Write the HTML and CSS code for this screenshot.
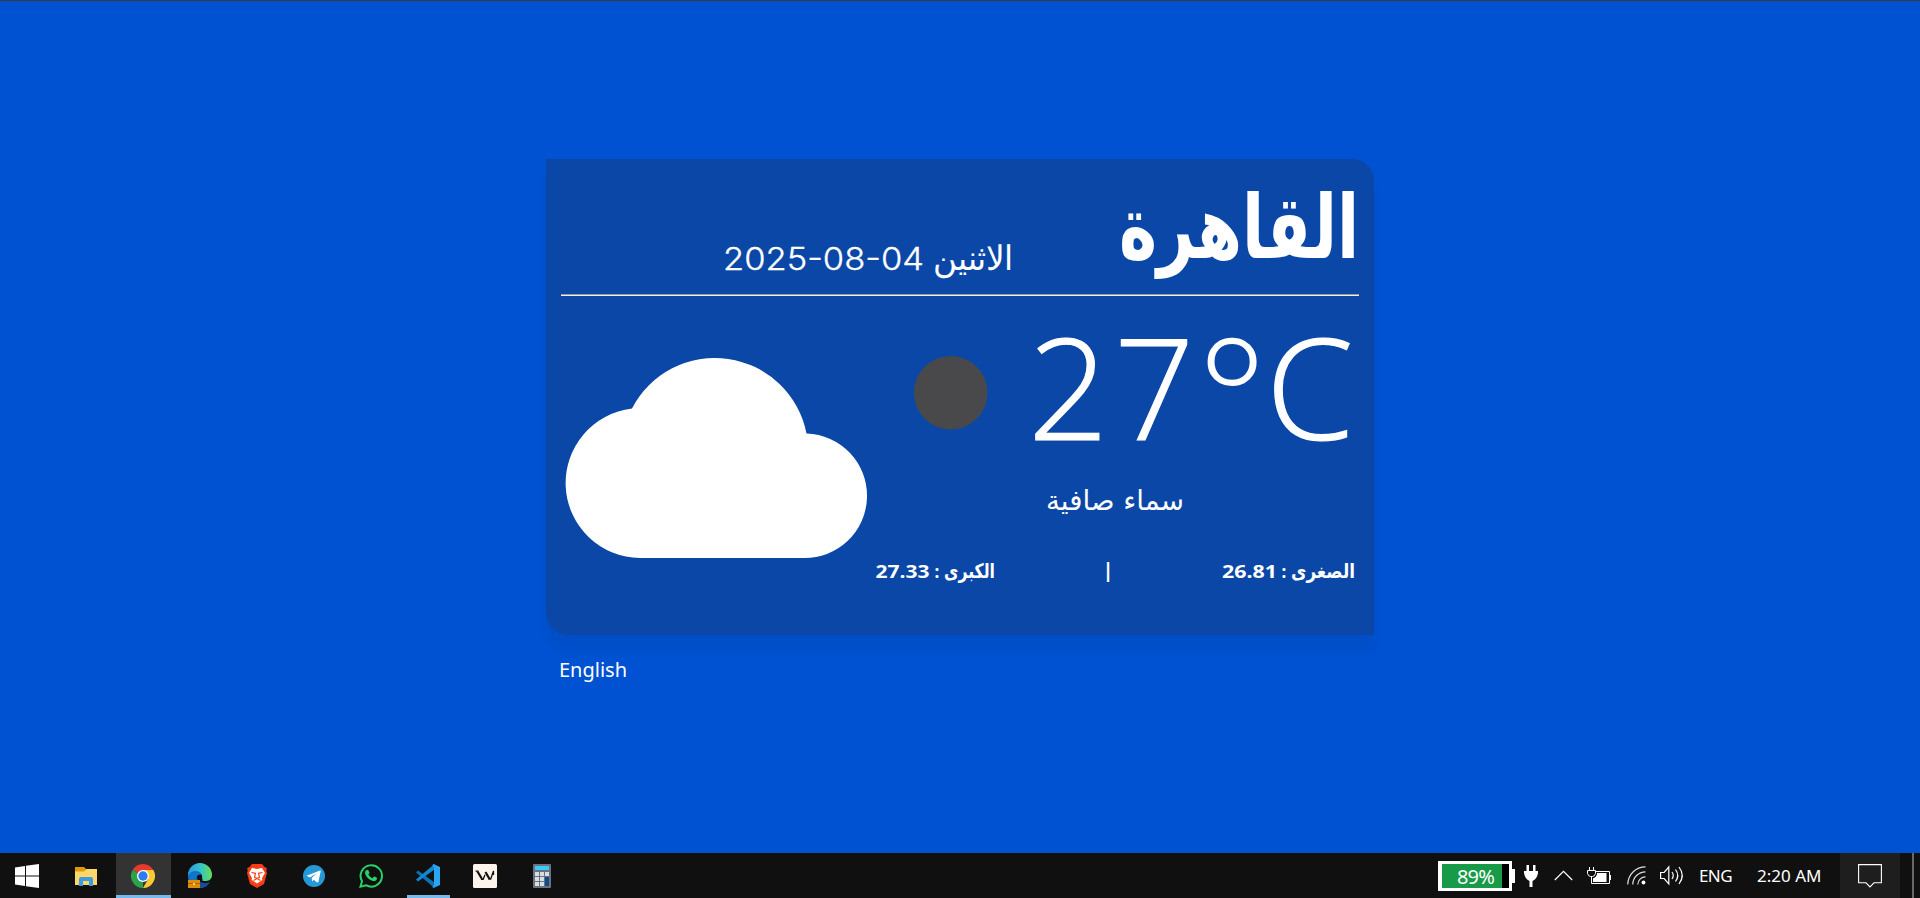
FILE: index.html
```html
<!DOCTYPE html>
<html lang="ar">
<head>
<meta charset="utf-8">
<title>القاهرة</title>
<link rel="stylesheet" href="styles.css">
</head>
<body>
<main class="page">
  <div class="container">
    <section class="card">
      <header class="head">
        <svg class="city" width="240" height="120" viewBox="0 0 240 120"><text x="0" y="84" textLength="240" lengthAdjust="spacingAndGlyphs">القاهرة</text></svg>
        <svg class="date" width="300" height="120" viewBox="0 0 300 120"><text class="num" x="4" y="96" textLength="201" lengthAdjust="spacingAndGlyphs">2025-08-04</text><text class="ar" x="214" y="96" textLength="80" lengthAdjust="spacingAndGlyphs">الاثنين</text></svg>
      </header>
      <hr class="rule">
      <div class="body">
        <div class="info">
          <div class="temp-row">
            <svg class="temp" width="330" height="160" viewBox="0 0 330 160"><text y="144"><tspan x="-1">2</tspan><tspan x="85">7</tspan><tspan class="deg" x="168" y="161">°</tspan><tspan x="237" y="144">C</tspan></text></svg>
            <svg class="moon" width="74" height="74" viewBox="0 0 74 74"><circle cx="36.700" cy="36.700" r="36.800"/></svg>
          </div>
          <svg class="cond" width="160" height="50" viewBox="0 0 160 50"><text x="12" y="34" textLength="138" lengthAdjust="spacingAndGlyphs">سماء صافية</text></svg>
          <div class="range">
            <svg width="132" height="40" viewBox="0 0 132 40"><text x="0" y="22" class="bold" textLength="55" lengthAdjust="spacingAndGlyphs">26.81</text><text x="59.500" y="22" class="bold">:</text><text x="69" y="22" class="bold ar" textLength="64" lengthAdjust="spacingAndGlyphs">الصغرى</text></svg>
            <span class="bar">|</span>
            <svg width="119" height="40" viewBox="0 0 119 40"><text x="0.500" y="22" class="bold" textLength="54" lengthAdjust="spacingAndGlyphs">27.33</text><text x="59.500" y="22" class="bold">:</text><text x="69" y="22" class="bold ar" textLength="51" lengthAdjust="spacingAndGlyphs">الكبرى</text></svg>
          </div>
        </div>
        <svg class="cloud" width="300" height="200" viewBox="0 0 300 200"><path d="M75 200A75 75 0 0 1 67 50.500A93.300 93.300 0 0 1 241.500 75.500A62 62 0 0 1 238 200Z"/></svg>
      </div>
    </section>
    <button class="lang">English</button>
  </div>
</main>
<footer class="taskbar">
  <div class="start"><svg width="24" height="24" viewBox="0 0 24 24"><path fill="#fff" d="M0 3.500 10 2v9.500H0zM11 1.800 24 0v11.500H11zM0 12.500h10V22L0 20.500zM11 12.500h13V24l-13-1.800z"/></svg></div>
  <nav class="apps">
    <div class="app"><svg width="24" height="24" viewBox="0 0 24 24"><path fill="#df9a09" d="M1 3h9l2 2v4H1z"/><path fill="#ffd768" d="M1 7.500h9L12.500 5H23v16H1z"/><path fill="#3d9be0" d="M5 22v-7q0-2 2-2h10q2 0 2 2v7h-4v-5H9v5z"/></svg></div>
    <div class="app active"><svg width="24" height="24" viewBox="0 0 24 24"><path fill="#e33b2e" d="M12 12 1.600 6A12 12 0 0 1 22.400 6z"/><path fill="#2ba24c" d="M12 12 12 24A12 12 0 0 1 1.600 6z"/><path fill="#fcc934" d="M12 6h10.400A12 12 0 0 1 12 24l5.200-9z"/><circle cx="12" cy="12" r="6" fill="#fff"/><circle cx="12" cy="12" r="4.700" fill="#2f7cf0"/></svg></div>
    <div class="app"><svg width="24" height="24" viewBox="0 0 24 24"><defs><linearGradient id="edge"><stop offset="0" stop-color="#229be4"/><stop offset=".5" stop-color="#35c1cf"/><stop offset="1" stop-color="#64df52"/></linearGradient></defs><path fill="url(#edge)" d="M0 11A12 12 0 0 1 24 11c0 5-4 6-7 6-4 0-3-2-3-5 0-4-8-4-12 1z"/><path fill="#1275c9" d="M0 12c2-6 12-7 14-1-4-2-6 2-5 5 1 4 7 6 12 3-3 5-9 6-13 4C2 22 0 17 0 12z"/><path fill="#101010" d="M9.500 12.500q2-2.500 4.500-1 0 3 .5 4.500H12q-2.500-1-2.500-3.500z"/><path fill="#174c9b" d="M9 14c2 5 8 6 13 4-3 6-10 7-13 4z"/><rect y="16" width="12" height="8" fill="#df8c0c"/><path fill="#ad5f06" d="M0 19h12v1H0z"/><path fill="#ffd04a" d="M5 19h2v2H5z"/></svg></div>
    <div class="app"><svg width="24" height="24" viewBox="0 0 24 24"><path fill="#f53d16" d="M7 0h10l2.500 3 2.300 1-.5 3 .7 2-3 11L12 24l-7-4-3-11 .7-2-.5-3 2.300-1z"/><path fill="#fff" d="m7 4 5 1 5-1 3 5-3 5 .4 2L12 19.500 6.600 16l.4-2-3-5z"/><path stroke="#f53d16" stroke-width="1.200" fill="none" d="m6.500 8.500 4 .8-1 4 2.500 1.200 2.500-1.200-1-4 4-.8M8.500 16.500 12 14.500l3.500 2"/></svg></div>
    <div class="app"><svg width="24" height="24" viewBox="0 0 24 24"><circle cx="12" cy="12" r="11" fill="#2599d6"/><path fill="#fff" d="m4.500 11.800 13.500-5.300q1-.2.700 1l-2.300 10.300q-.4 1.100-1.500.4l-3.200-2.400-1.600 1.700-.4-3.500 5-4.800-6.800 4.200z"/></svg></div>
    <div class="app"><svg width="24" height="24" viewBox="0 0 24 24"><path fill="none" stroke="#25d366" stroke-width="2" d="m1.500 22.600 1.500-5.400A10.700 10.700 0 1 1 7 21.200z"/><path fill="#25d366" d="M7.500 6h1.300q.5 0 .7.500l.9 2.100q.1.500-.2.900l-.9 1.100q1.500 2.600 4.200 3.700l1.300-1.500q.4-.4.800-.2l2.200 1.100q.4.300.3.800c-.3 1.600-1.800 2.700-3.500 2.600C10.500 16.500 6.500 12.500 6 9c0-1.300.7-2.500 1.500-3z"/></svg></div>
    <div class="app open"><svg width="24" height="24" viewBox="0 0 24 24"><path fill="#0b70b7" d="M0 8.500 2 6.500l16.500 12V24z"/><path fill="#1187d2" d="m0 15.500 2 2L18.500 5.500V0z"/><path fill="#29a5f3" d="M17.500 0 24 3v18l-6.500 3L16 22.500q2 .2 2-1.500V3q0-1.700-2-1.500z"/></svg></div>
    <div class="app"><svg width="24" height="24" viewBox="0 0 24 24"><rect width="24" height="24" rx="1.500" fill="#fdf4eb"/><path stroke="#111" stroke-width="2.200" fill="none" d="m4.500 7.500 4.500 7.500M12.500 8l4 7"/><path stroke="#111" stroke-width="1.300" fill="none" d="M2.500 7.200h3M8 15.300h2.200l1.800-4.500M15.500 15h2.200l2.800-8v4"/></svg></div>
    <div class="app"><svg width="24" height="24" viewBox="0 0 24 24"><rect x="3" width="18" height="24" rx="1" fill="#68737e"/><path fill="#3dc9f5" d="M5 2h14v4H5z"/><path fill="#d9dee3" d="M5 8h4v4H5zM10 8h4v4h-4zM15 8h4v4h-4zM5 13h4v4H5zM10 13h4v4h-4zM5 18h4v4H5zM10 18h4v4h-4z"/><path fill="#10498e" d="M15 13h4v9h-4z"/></svg></div>
  </nav>
  <div class="tray">
    <div class="battery"><div class="cell"><span>89%</span></div><i class="tip"></i></div>
    <svg class="plug" width="14" height="22" viewBox="0 0 14 22"><path fill="#fff" d="M2.500 0H5v6h4V0h2.500v6H14v2q-1 6-5.500 8v6h-3v-6Q1 14 0 8V6h2.500z"/></svg>
    <svg class="chev" width="19" height="11" viewBox="0 0 19 11"><path fill="none" stroke="#fff" stroke-width="1.200" d="m.8 10 8.700-8.700 8.700 8.700"/></svg>
    <svg class="charge" width="25" height="18" viewBox="0 0 25 18"><g fill="none" stroke="#fff"><path d="M9 4.500h13.500v12h-18v-5M23.500 8v5"/><path d="M2.500 0v3.500m4-3.500v3.500M.5 3.500h8v3q-1 3-3 3h-2q-2 0-3-3zM4.500 9.500v4"/></g><path fill="#fff" d="M10 6h9.500v9H6v-3.500q3-1 4-4z"/></svg>
    <svg class="wifi" width="19" height="19" viewBox="0 0 19 19"><g fill="none" stroke="#ddd" stroke-width="1.200"><path d="M.8 18.500A17.700 17.700 0 0 1 18.500.8M5.800 18.500A12.700 12.700 0 0 1 18.500 5.800M10.800 18.500A7.700 7.700 0 0 1 18.500 10.800"/></g><circle cx="16.500" cy="16.500" r="1.900" fill="#fff"/></svg>
    <svg class="sound" width="24" height="19" viewBox="0 0 24 19"><g fill="none" stroke="#fff" stroke-width="1.200"><path d="M.6 6.500h3.500L8.800 1v16.800l-4.700-5.300H.6zM12 6q2.500 3.500 0 7M15.500 3.500q4.500 6 0 12M19 1q6.500 8.500 0 17"/></g></svg>
    <span class="lng">ENG</span>
    <span class="clock">2:20 AM</span>
    <div class="notice"><svg width="24" height="24" viewBox="0 0 24 24"><path fill="none" stroke="#fff" stroke-width="1.100" d="M.6.600h22.800v18.200H16L12 23l-4-4.200H.6z"/></svg></div>
    <i class="peek"></i>
  </div>
</footer>
</body>
</html>
```
FILE: styles.css
```css
* { box-sizing: border-box; }
body {
  margin: 0;
  height: 898px;
  overflow: hidden;
  display: flex;
  flex-direction: column;
  background: #0052d2;
  color: #fff;
  font-family: "Open Sans", "DejaVu Sans", sans-serif;
}
svg { display: block; flex: none; overflow: visible; }
svg text { fill: #fff; }
.page {
  flex: 1;
  border-top: 1px solid #3c3c3c;
  padding-top: 158px;
}
.container { width: 828px; margin: 0 auto; }
.card {
  direction: rtl;
  height: 476px;
  padding: 15px;
  background: #0b47a7;
  border-radius: 0 22px 0 22px;
  box-shadow: 0 15px 10px rgba(0, 0, 0, .05);
}
.card svg { direction: ltr; }
.head { display: flex; gap: 100px; height: 120px; }
.city text { font: 700 88px "DejaVu Sans", sans-serif; }
.date .num { font: 300 31px Inter, sans-serif; stroke: #fff; stroke-width: .3px; }
.date .ar { font: 300 34px "DejaVu Sans", sans-serif; }
.rule {
  margin: 0;
  height: 2px;
  border: 0;
  border-top: 1px solid #9a9a9a;
  border-bottom: 1px solid #eee;
}
.body { display: flex; }
.info { width: 490px; }
.temp-row { display: flex; gap: 41px; }
.temp text {
  font: 300 141px "Open Sans", sans-serif;
  stroke: #fff;
  stroke-width: 1.2px;
}
.temp .deg { font-size: 164px; stroke-width: 0; }
.moon { margin-top: 60px; fill: #49494b; }
.cond { margin: 20px auto 0; }
.cond text { font: 28px "DejaVu Sans", sans-serif; }
.range {
  display: flex;
  justify-content: space-between;
  margin-top: 30px;
  padding: 0 5px 0 6px;
}
.bold { font: 700 17px "Open Sans", sans-serif; }
.bold.ar { font: 700 20px "DejaVu Sans", sans-serif; }
.bar { font: 700 20px/28px "Open Sans", sans-serif; }
.cloud { margin: 62px 4px 0 0; fill: #fff; }
.lang {
  display: block;
  margin: 20px 0 0 13px;
  padding: 0;
  border: 0;
  background: none;
  color: #fff;
  font: 400 20px/29px "Noto Sans", sans-serif;
}
.taskbar { display: flex; height: 45px; background: #101010; }
.start {
  width: 54px;
  margin-right: 5px;
  display: flex;
  align-items: center;
  justify-content: center;
}
.apps { display: flex; gap: 2px; }
.app {
  width: 55px;
  display: flex;
  align-items: center;
  justify-content: center;
  padding: 1px 1px 0 0;
}
.app.active { background: linear-gradient(#333 42px, #76b9ed 42px); }
.app.open { background: linear-gradient(#76b9ed, #76b9ed) center bottom / 43px 3px no-repeat; }
.tray {
  display: flex;
  align-items: center;
  margin-left: auto;
  font: 16px "Noto Sans", sans-serif;
}
.battery { display: flex; align-items: center; width: 77px; }
.cell {
  width: 74px;
  height: 30px;
  border: 3px solid #fff;
  border-left-width: 4px;
  background: linear-gradient(90deg, #179b48 60px, #000 60px);
  text-align: center;
  font-size: 20px;
  line-height: 25px;
  letter-spacing: -.8px;
}
.tip { width: 3px; height: 14px; background: #fff; }
.plug { margin-left: 9px; }
.chev { margin-left: 16px; }
.charge { margin-left: 14px; }
.wifi { margin-left: 15px; }
.sound { margin-left: 14px; }
.lng { margin-left: 15px; width: 34px; font-size: 17px; letter-spacing: -.6px; }
.clock { margin-left: 24px; width: 69px; font-size: 17px; white-space: nowrap; }
.notice {
  margin-left: 14px;
  width: 60px;
  height: 45px;
  display: flex;
  align-items: center;
  justify-content: center;
  background: #1e1e1e;
}
.peek { width: 2px; height: 45px; margin: 0 6px 0 12px; background: #686868; }
```
